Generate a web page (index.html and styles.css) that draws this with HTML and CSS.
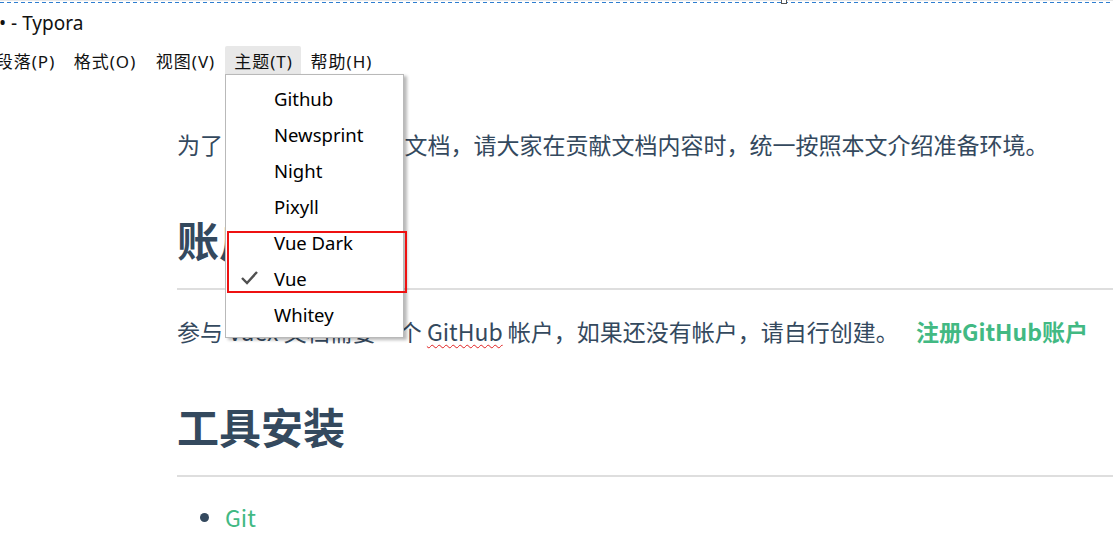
FILE: index.html
```html
<!DOCTYPE html>
<html lang="zh-CN">
<head>
<meta charset="utf-8">
<title>Typora</title>
<link rel="stylesheet" href="styles.css">
</head>
<body>
<div class="window">
  <div class="frame-line"></div>
  <div class="frame-handle"></div>
  <div class="titlebar"><span class="title-text">• - Typora</span></div>
  <div class="menubar">
    <span class="menu-item w78">段落(P)</span>
    <span class="menu-item w81">格式(O)</span>
    <span class="menu-item w80">视图(V)</span>
    <span class="menu-item w76 active">主题(T)</span>
    <span class="menu-item w80">帮助(H)</span>
  </div>
  <div class="dropdown">
    <div class="dd-item"><span class="dd-check"></span>Github</div>
    <div class="dd-item"><span class="dd-check"></span>Newsprint</div>
    <div class="dd-item"><span class="dd-check"></span>Night</div>
    <div class="dd-item"><span class="dd-check"></span>Pixyll</div>
    <div class="dd-item"><span class="dd-check"></span>Vue Dark</div>
    <div class="dd-item"><span class="dd-check"><svg width="20" height="16" viewBox="0 0 20 16"><polyline points="2,8 7,13 17,2" fill="none" stroke="#505050" stroke-width="2.4"/></svg></span>Vue</div>
    <div class="dd-item"><span class="dd-check"></span>Whitey</div>
  </div>
  <div class="highlight-box"></div>
  <div class="doc">
    <p class="para first">为了 规范社区的Vuejs 文档，请大家在贡献文档内容时，统一按照本文介绍准备环境。</p>
    <h2 class="heading">账户</h2>
    <p class="para">参与 Vuex 文档需要一个 <span class="spell">GitHub</span> 帐户，如果还没有帐户，请自行创建。 <a class="link strong gap">注册GitHub账户</a></p>
    <h2 class="heading">工具安装</h2>
    <ul class="list">
      <li><a class="link">Git</a></li>
    </ul>
  </div>
</div>
</body>
</html>
```

FILE: styles.css
```css
* { box-sizing: border-box; }
html, body {
  margin: 0;
  padding: 0;
  background: #ffffff;
  width: 1113px;
  height: 533px;
  overflow: hidden;
}
.window {
  position: relative;
  width: 1113px;
  height: 533px;
  overflow: hidden;
  font-family: "Noto Sans", "Noto Sans CJK SC", sans-serif;
}
.frame-line {
  height: 3px;
  border-top: 1px solid #e6e6e6;
  background: repeating-linear-gradient(90deg, #2f7ed0 0 4px, transparent 4px 7px) 0 1px / 100% 1px no-repeat;
}
.frame-handle {
  position: absolute;
  left: 781px;
  top: -1px;
  width: 6px;
  height: 5px;
  border: 1px solid #555;
  background: #fff;
}
.titlebar {
  height: 43px;
  padding-top: 7px;
  line-height: 26px;
}
.title-text {
  font-size: 19px;
  color: #111;
  margin-left: -1px;
}
.menubar {
  height: 28px;
  display: flex;
  margin-left: -14px;
}
.menu-item {
  display: flex;
  align-items: center;
  justify-content: center;
  font-size: 17px;
  letter-spacing: 1px;
  color: #111;
  height: 28px;
  padding-left: 1px;
  border-radius: 2px 2px 0 0;
}
.w76 { width: 76px; }
.w78 { width: 78px; }
.w80 { width: 80px; }
.w81 { width: 81px; }
.menu-item.active {
  background: #e8e8e8;
}
.dropdown {
  position: absolute;
  left: 225px;
  top: 74px;
  width: 179px;
  height: 264px;
  background: #fff;
  border: 1px solid #b9b9b9;
  box-shadow: 3px 2px 3px rgba(0, 0, 0, 0.28);
  padding-top: 5px;
  z-index: 2;
}
.dd-item {
  height: 36px;
  display: flex;
  align-items: center;
  font-size: 18.5px;
  color: #000;
}
.dd-check {
  width: 48px;
  display: flex;
  justify-content: flex-start;
  padding-left: 14px;
  align-items: center;
}
.highlight-box {
  position: absolute;
  left: 227px;
  top: 231px;
  width: 180px;
  height: 62px;
  border: 2px solid #ee1111;
  z-index: 3;
}
.doc {
  padding-left: 177px;
  color: #34495e;
  font-family: "Noto Sans CJK SC", "Noto Sans", sans-serif;
}
.para {
  margin: 24px 0 0;
  font-size: 23px;
  line-height: 36px;
  white-space: nowrap;
}
.para.first {
  margin-top: 52px;
}
.heading {
  margin: 53px 0 0;
  font-size: 42px;
  line-height: 50px;
  font-weight: 700;
  padding-bottom: 24px;
  border-bottom: 2px solid #dedede;
}
.heading + .para {
  margin-top: 23px;
}
.para + .heading {
  margin-top: 52px;
}
.link {
  color: #42b983;
  text-decoration: none;
}
.strong {
  font-weight: 700;
}
.gap {
  margin-left: 12px;
}
.spell {
  text-decoration: underline wavy #e02020;
  text-decoration-thickness: 1px;
  text-underline-offset: 3px;
}
.list {
  margin: 22px 0 0;
  padding-left: 48px;
  font-size: 23px;
  line-height: 36px;
}
.list li::marker {
  color: #34495e;
}
```
